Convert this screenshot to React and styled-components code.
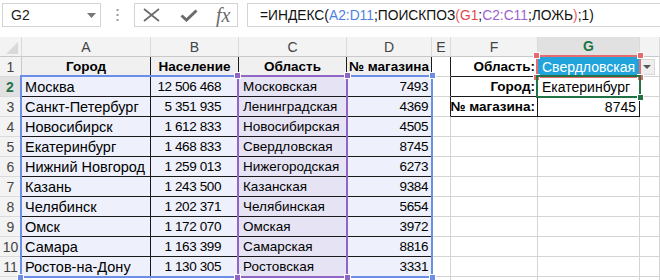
import React from 'react';
import styled, { createGlobalStyle } from 'styled-components';

const GlobalStyle = createGlobalStyle`
	body {
		margin: 0;
		background: #fff;
		font-family: "Liberation Sans", Arial, sans-serif;
	}
`;

const Page = styled.div`
	width: 660px;
	height: 280px;
	overflow: hidden;
	background: #fff;
`;

const FormulaBar = styled.div`
	display: flex;
	align-items: flex-start;
	height: 37px;
	padding: 3px 0 0 2px;
	box-sizing: border-box;
`;

const NameBox = styled.div`
	box-sizing: border-box;
	width: 99px;
	height: 24px;
	border: 1px solid #d4d4d4;
	display: flex;
	align-items: center;
	justify-content: space-between;
	padding: 0 4px 0 8px;
	font-size: 14px;
	color: #222;
`;

const Grip = styled.div`
	width: 33px;
	height: 24px;
	display: flex;
	align-items: center;
	justify-content: center;
`;

const ToolBox = styled.div`
	box-sizing: border-box;
	width: 104px;
	height: 24px;
	border: 1px solid #d4d4d4;
	display: flex;
	align-items: center;
	padding-left: 8px;
	gap: 20px;
`;

const FxLabel = styled.span`
	font-family: "Liberation Serif", "Times New Roman", serif;
	font-style: italic;
	font-size: 20px;
	color: #6b6b6b;
	margin-left: -2px;
	line-height: 1;
`;

const FormulaInput = styled.div`
	box-sizing: border-box;
	flex: 1;
	margin-left: 9px;
	height: 24px;
	border: 1px solid #d4d4d4;
	border-right: none;
	display: flex;
	align-items: center;
	padding-left: 12px;
	font-size: 13.8px;
	color: #111;
	white-space: nowrap;
`;

const Ref = styled.span`
	color: ${p => p.$color};
`;

const SheetWrap = styled.div`
	position: relative;
`;

const Grid = styled.div`
	display: grid;
	grid-template-columns: 22px 129px 88px 108px 85px 19px 87px 102px 20px;
	grid-auto-rows: 20px;
`;

const OverlayGrid = styled(Grid)`
	position: absolute;
	inset: 0;
	pointer-events: none;
`;

const Cell = styled.div`
	box-sizing: border-box;
	display: flex;
	align-items: center;
	justify-content: ${p => (p.$align === 'right' ? 'flex-end' : p.$align === 'center' ? 'center' : 'flex-start')};
	padding: 0 ${p => p.$pr ?? 3}px 0 ${p => p.$pl ?? 3}px;
	background: ${p => p.$bg || '#fff'};
	border-right: 1px solid ${p => p.$br || '#d4d4d4'};
	border-bottom: 1px solid ${p => p.$bb || '#d4d4d4'};
	font-size: ${p => p.$size || 14}px;
	font-weight: ${p => (p.$bold ? 700 : 400)};
	letter-spacing: ${p => p.$ls || 0}px;
	color: ${p => p.$color || '#000'};
	white-space: nowrap;
	overflow: hidden;
`;

const ColHead = styled.div`
	box-sizing: border-box;
	display: flex;
	align-items: center;
	justify-content: center;
	background: ${p => (p.$active ? '#e1e1e1' : '#f3f3f3')};
	border-right: 1px solid #dadada;
	border-bottom: ${p => (p.$active ? '2px solid #217346' : '1px solid #c8c8c8')};
	font-size: 14px;
	font-weight: ${p => (p.$active ? 700 : 400)};
	color: ${p => (p.$active ? '#217346' : '#444')};
`;

const Corner = styled(ColHead)`
	justify-content: flex-end;
	align-items: flex-end;
	padding: 0 3px 2px 0;
`;

const RowHead = styled.div`
	box-sizing: border-box;
	display: flex;
	align-items: center;
	justify-content: center;
	background: ${p => (p.$active ? '#e1e1e1' : '#f3f3f3')};
	border-right: ${p => (p.$active ? '2px solid #217346' : '1px solid #c8c8c8')};
	border-bottom: 1px solid #dadada;
	font-size: 14px;
	font-weight: ${p => (p.$active ? 700 : 400)};
	color: ${p => (p.$active ? '#217346' : '#444')};
`;

const DropButton = styled.div`
	box-sizing: border-box;
	width: 16px;
	height: 16px;
	margin-left: -1px;
	background: #eeeeee;
	border: 1px solid #d8d8d8;
	display: flex;
	align-items: center;
	justify-content: center;
`;

const RangeBox = styled.div`
	grid-column: ${p => p.$col};
	grid-row: ${p => p.$row};
	margin: -2px -1px -1px -2px;
	border: 2px solid ${p => p.$color};
	position: relative;
`;

const Handle = styled.span`
	position: absolute;
	width: 5px;
	height: 5px;
	background: ${p => p.$color};
	border: 1px solid #fff;
	${p => (p.$top ? 'top: -5px;' : 'bottom: -5px;')}
	${p => (p.$left ? 'left: -5px;' : 'right: -5px;')}
`;

const BLUE = '#6b8fe6';
const PURPLE = '#9065c6';
const RED = '#e56b6f';
const GREEN = '#217346';
const BLACK = '#1a1a1a';
const FILL = '#eef1fb';
const FILL_C = '#e6e4f4';
const HEAD_FILL = '#f0f0f0';

const data = [
	['Москва', '12 506 468', 'Московская', '7493'],
	['Санкт-Петербург', '5 351 935', 'Ленинградская', '4369'],
	['Новосибирск', '1 612 833', 'Новосибирская', '4505'],
	['Екатеринбург', '1 468 833', 'Свердловская', '8745'],
	['Нижний Новгород', '1 259 013', 'Нижегородская', '6273'],
	['Казань', '1 243 500', 'Казанская', '9384'],
	['Челябинск', '1 202 371', 'Челябинская', '5654'],
	['Омск', '1 172 070', 'Омская', '3972'],
	['Самара', '1 163 399', 'Самарская', '8816'],
	['Ростов-на-Дону', '1 130 305', 'Ростовская', '3331']
];

const lookup = [
	['Область:', 'Свердловская'],
	['Город:', 'Екатеринбург'],
	['№ магазина:', '8745']
];

const Handles = ({ color, corners = ['tl', 'tr', 'bl', 'br'] }) =>
	corners.map(c => <Handle key={c} $color={color} $top={c[0] === 't'} $left={c[1] === 'l'} />);

const SideCells = ({ index }) => {
	const item = lookup[index];
	if (!item) {
		return (
			<>
				<Cell />
				<Cell />
				<Cell />
				<Cell />
			</>
		);
	}
	return (
		<>
			<Cell $br={BLACK} />
			<Cell $br={BLACK} $bb={BLACK} $bold $align="right" $size={13.5} $pr={2}>
				{item[0]}
			</Cell>
			{index === 0 ? (
				<Cell $br={BLACK} $bb={BLACK} $bg="#21a4dc" $color="#fff" $size={14} $pl={4}>
					{item[1]}
				</Cell>
			) : (
				<Cell $br={BLACK} $bb={BLACK} $size={14} $pl={4} $align={index === 2 ? 'right' : 'left'}>
					{item[1]}
				</Cell>
			)}
			<Cell $pl={0}>
				{index === 0 && (
					<DropButton>
						<svg width="8" height="4" viewBox="0 0 8 4">
							<polygon points="0,0 8,0 4,4" fill="#555" />
						</svg>
					</DropButton>
				)}
			</Cell>
		</>
	);
};

const App = () => (
	<Page>
		<GlobalStyle />
		<FormulaBar>
			<NameBox>
				G2
				<svg width="9" height="5" viewBox="0 0 9 5">
					<polygon points="0,0 9,0 4.5,5" fill="#777" />
				</svg>
			</NameBox>
			<Grip>
				<svg width="3" height="12" viewBox="0 0 3 12">
					<rect x="0.5" y="0" width="2" height="2" fill="#9a9a9a" />
					<rect x="0.5" y="5" width="2" height="2" fill="#9a9a9a" />
					<rect x="0.5" y="10" width="2" height="2" fill="#9a9a9a" />
				</svg>
			</Grip>
			<ToolBox>
				<svg width="17" height="14" viewBox="0 0 17 14">
					<path d="M1 1 L16 13 M16 1 L1 13" stroke="#6b6b6b" strokeWidth="1.7" fill="none" />
				</svg>
				<svg width="18" height="13" viewBox="0 0 18 13">
					<path d="M1.5 6.5 L6.5 11 L16.5 1.5" stroke="#6b6b6b" strokeWidth="3" fill="none" />
				</svg>
				<FxLabel>fx</FxLabel>
			</ToolBox>
			<FormulaInput>
				=ИНДЕКС(<Ref $color="#4d7fe0">A2:D11</Ref>;ПОИСКПОЗ<Ref $color="#e5605f">(</Ref>
				<Ref $color="#e0484b">G1</Ref>;<Ref $color="#9a63d0">C2:C11</Ref>;ЛОЖЬ
				<Ref $color="#e5605f">)</Ref>;1)
			</FormulaInput>
		</FormulaBar>

		<SheetWrap>
			<Grid>
				<Corner>
					<svg width="12" height="12" viewBox="0 0 12 12">
						<polygon points="12,0 12,12 0,12" fill="#d9d9d9" />
					</svg>
				</Corner>
				{['A', 'B', 'C', 'D', 'E', 'F', 'G', ''].map((l, i) => (
					<ColHead key={i} $active={l === 'G'}>
						{l}
					</ColHead>
				))}

				<RowHead>1</RowHead>
				{['Город', 'Население', 'Область', '№ магазина'].map(h => (
					<Cell key={h} $br={BLACK} $bb={BLACK} $bg={HEAD_FILL} $bold $align="center" $size={13.5}>
						{h}
					</Cell>
				))}
				<SideCells index={0} />

				{data.map((row, i) => (
					<React.Fragment key={row[0]}>
						<RowHead $active={i === 0}>{i + 2}</RowHead>
						<Cell $br={BLACK} $bb={BLACK} $bg={FILL} $size={14.5} $pl={3}>
							{row[0]}
						</Cell>
						<Cell $br={BLACK} $bb={BLACK} $bg={FILL} $align="right" $pr={17} $size={13.5} $ls={-0.4}>
							{row[1]}
						</Cell>
						<Cell $br={BLACK} $bb={BLACK} $bg={FILL_C} $size={13.5} $pl={4}>
							{row[2]}
						</Cell>
						<Cell $br={BLACK} $bb={BLACK} $bg={FILL} $align="right" $pr={3} $size={13.5} $ls={-0.4}>
							{row[3]}
						</Cell>
						<SideCells index={i + 1} />
					</React.Fragment>
				))}

				<RowHead />
				{Array.from({ length: 8 }, (_, i) => (
					<Cell key={i} />
				))}
			</Grid>

			<OverlayGrid>
				<RangeBox $col="2 / 6" $row="3 / 13" $color={BLUE}>
					<Handles color={BLUE} corners={['tr', 'bl', 'br']} />
				</RangeBox>
				<RangeBox $col="4 / 5" $row="3 / 13" $color={PURPLE}>
					<Handles color={PURPLE} />
				</RangeBox>
				<RangeBox $col="8 / 9" $row="2 / 3" $color={RED}>
					<Handles color={RED} />
				</RangeBox>
				<RangeBox $col="8 / 9" $row="3 / 4" $color={GREEN}>
					<Handles color={GREEN} corners={['br']} />
				</RangeBox>
			</OverlayGrid>
		</SheetWrap>
	</Page>
);

export default App;
